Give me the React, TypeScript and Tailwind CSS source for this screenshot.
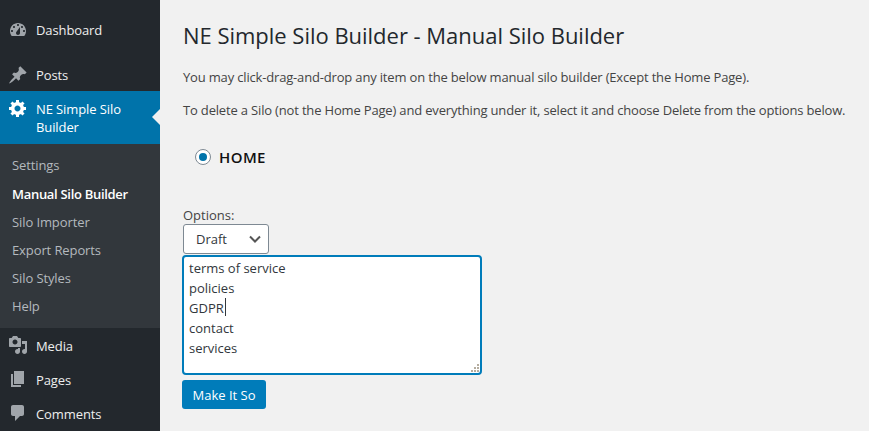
const font = "font-['Open_Sans','Noto_Sans',sans-serif]";

function Icon({ d, className }: { d: string; className?: string }) {
  return (
    <svg viewBox="0 0 20 20" width="20" height="20" fill="currentColor" fillRule="evenodd" className={className}>
      <path d={d} />
    </svg>
  );
}

const icons = {
  dashboard:
    'M3.76 16h12.48c1.1-1.37 1.76-3.11 1.76-5 0-4.42-3.58-8-8-8s-8 3.58-8 8c0 1.89.66 3.63 1.76 5zM10 4c.55 0 1 .45 1 1s-.45 1-1 1-1-.45-1-1 .45-1 1-1zM6 6c.55 0 1 .45 1 1s-.45 1-1 1-1-.45-1-1 .45-1 1-1zm8 0c.55 0 1 .45 1 1s-.45 1-1 1-1-.45-1-1 .45-1 1-1zm-5.37 5.55L12 7v6c0 1.1-.9 2-2 2s-2-.9-2-2c0-.57.24-1.08.63-1.45zM4 10c.55 0 1 .45 1 1s-.45 1-1 1-1-.45-1-1 .45-1 1-1zm12 0c.55 0 1 .45 1 1s-.45 1-1 1-1-.45-1-1 .45-1 1-1z',
  pin: 'M10.44 3.02l1.82-1.82 6.36 6.35-1.83 1.82c-1.05-.68-2.48-.57-3.41.36l-.75.75c-.92.93-1.04 2.35-.35 3.41l-1.83 1.82-2.41-2.41-2.8 2.79c-.42.42-3.38 2.71-3.8 2.29s1.86-3.39 2.28-3.81l2.79-2.79L4.1 9.36l1.83-1.82c1.05.69 2.48.57 3.4-.36l.75-.75c.93-.92 1.05-2.35.36-3.41z',
  gear: 'M18 12h-2.18c-.17.7-.44 1.35-.81 1.93l1.54 1.54-2.1 2.1-1.54-1.54c-.58.36-1.23.63-1.91.79V19H8v-2.18c-.68-.16-1.33-.43-1.91-.79l-1.54 1.54-2.12-2.12 1.54-1.54c-.36-.58-.63-1.23-.79-1.91H1V9.03h2.17c.16-.7.44-1.35.8-1.94L2.43 5.55l2.1-2.1 1.54 1.54c.58-.37 1.24-.64 1.93-.81V2h3v2.18c.68.16 1.33.43 1.91.79l1.54-1.54 2.12 2.12-1.54 1.54c.36.59.64 1.24.8 1.94H18V12zm-8.5 1.5c1.66 0 3-1.34 3-3s-1.34-3-3-3-3 1.34-3 3 1.34 3 3 3z',
  media:
    'M13 11V4c0-.55-.45-1-1-1h-1.67L9 1H5L3.67 3H2c-.55 0-1 .45-1 1v7c0 .55.45 1 1 1h10c.55 0 1-.45 1-1zM7 4.5c1.38 0 2.5 1.12 2.5 2.5S8.38 9.5 7 9.5 4.5 8.38 4.5 7 5.62 4.5 7 4.5zM14 6h5v10.5c0 1.38-1.12 2.5-2.5 2.5S14 17.88 14 16.5s1.12-2.5 2.5-2.5c.17 0 .34.02.5.05V9h-3V6zm-4 8.05V13h2v3.5c0 1.38-1.12 2.5-2.5 2.5S7 17.88 7 16.5 8.12 14 9.5 14c.17 0 .34.02.5.05z',
  page: 'M6 15V2h10v13H6zm-1 1h8v2H3V5h2v11z',
  comments:
    'M5 2h9c1.1 0 2 .9 2 2v7c0 1.1-.9 2-2 2h-2l-5 5v-5H5c-1.1 0-2-.9-2-2V4c0-1.1.9-2 2-2z',
};

function MenuItem({ icon, label, className, iconClass = '' }: { icon: string; label: string; className: string; iconClass?: string }) {
  return (
    <div className={`flex items-center text-[#eeeeee] ${className}`}>
      <Icon d={icon} className={`ml-[8px] text-[#a0a5aa] ${iconClass}`} />
      <span className="ml-[8px] pt-[2px]">{label}</span>
    </div>
  );
}

const submenu = ['Silo Importer', 'Export Reports', 'Silo Styles', 'Help'];

export default function App() {
  return (
    <div className={`flex h-[431px] w-[869px] overflow-hidden bg-[#f1f1f1] text-[13px] text-[#444444] ${font}`}>
      {/* menu lateral */}
      <aside className="w-[160px] shrink-0 bg-[#23282d] tracking-[-0.1px]">
        <MenuItem icon={icons.dashboard} label="Dashboard" className="mt-[13px] h-[34px]" />
        <MenuItem icon={icons.pin} label="Posts" className="mt-[11px] h-[33px]" />

        <div className="relative flex h-[53px] bg-[#0073aa] text-white">
          <Icon d={icons.gear} className="mt-[7px] ml-[8px]" />
          <span className="mt-[9px] ml-[8px] w-[110px] leading-[18px]">NE Simple Silo Builder</span>
          <div className="absolute top-[18px] right-0 h-0 w-0 border-y-[8px] border-r-[8px] border-y-transparent border-r-[#f1f1f1]"></div>
        </div>

        <div className="h-[184px] bg-[#32373c] pt-[8px] pl-[12px] text-[#b4b9be]">
          <div className="flex h-[28px] items-center">Settings</div>
          <div className="flex h-[29px] items-center font-semibold tracking-[-0.3px] text-white">Manual Silo Builder</div>
          {submenu.map((item) => (
            <div key={item} className="flex h-[28px] items-center">
              {item}
            </div>
          ))}
        </div>

        <MenuItem icon={icons.media} label="Media" className="mt-px h-[34px]" iconClass="mb-[2px]" />
        <MenuItem icon={icons.page} label="Pages" className="h-[34px]" iconClass="mb-[2px]" />
        <MenuItem icon={icons.comments} label="Comments" className="h-[34px]" iconClass="mb-[2px]" />
      </aside>

      {/* conteúdo */}
      <main className="flex-1 pl-[22px]">
        <h1 className="mt-[19px] ml-px text-[22px] leading-[32px] tracking-[-0.02px] text-[#23282d]">
          NE Simple Silo Builder - Manual Silo Builder
        </h1>
        <p className="mt-[16px] ml-px leading-[20px] tracking-[-0.17px]">
          You may click-drag-and-drop any item on the below manual silo builder (Except the Home Page).
        </p>
        <p className="mt-[13px] ml-px leading-[20px] tracking-[-0.17px]">
          To delete a Silo (not the Home Page) and everything under it, select it and choose Delete from the options below.
        </p>

        <div className="mt-[27px] ml-[13px] flex h-[20px] items-center">
          <div className="flex h-[16px] w-[16px] items-center justify-center rounded-full border border-[#7e8993] bg-white">
            <div className="h-[8px] w-[8px] rounded-full bg-[#0073aa]"></div>
          </div>
          <span className="ml-[8px] text-[15px] font-semibold tracking-[0.4px] text-[#111111]">HOME</span>
        </div>

        <div className="mt-[38px] ml-px h-[20px] leading-[20px]">Options:</div>

        <div className="relative mt-[-1px] ml-px h-[30px] w-[86px]">
          <select className="h-full w-full appearance-none rounded-[3px] border border-[#7e8993] bg-white pt-[2px] pl-[12px] text-[#32373c] outline-none">
            <option>Draft</option>
          </select>
          <svg viewBox="0 0 16 16" width="16" height="16" className="pointer-events-none absolute top-[7px] right-[6px] text-[#555555]" fill="none" stroke="currentColor" strokeWidth="2">
            <path d="M3 5.5l5 5 5-5" />
          </svg>
        </div>

        <div className="relative mt-px h-[120px] w-[300px]">
          <textarea
            readOnly
            defaultValue={'terms of service\npolicies\nGDPR\ncontact\nservices'}
            className="block h-full w-full resize-none rounded-[4px] border-2 border-[#007cba] bg-white px-[5px] py-px leading-[20px] text-[#32373c] outline-none"
          ></textarea>
          <div className="absolute top-[43px] left-[43px] h-[18px] w-px bg-[#32373c]"></div>
          <svg viewBox="0 0 8 8" width="8" height="8" fill="#b5ad9f" className="absolute right-[3px] bottom-[3px]">
            <path d="M6 0h2v2H6zM3 3h2v2H3zM6 3h2v2H6zM0 6h2v2H0zM3 6h2v2H3zM6 6h2v2H6z" />
          </svg>
        </div>

        <button className="mt-[5px] h-[29px] w-[84px] rounded-[3px] bg-[#007cba] pt-[2px] text-white">Make It So</button>
      </main>
    </div>
  );
}
